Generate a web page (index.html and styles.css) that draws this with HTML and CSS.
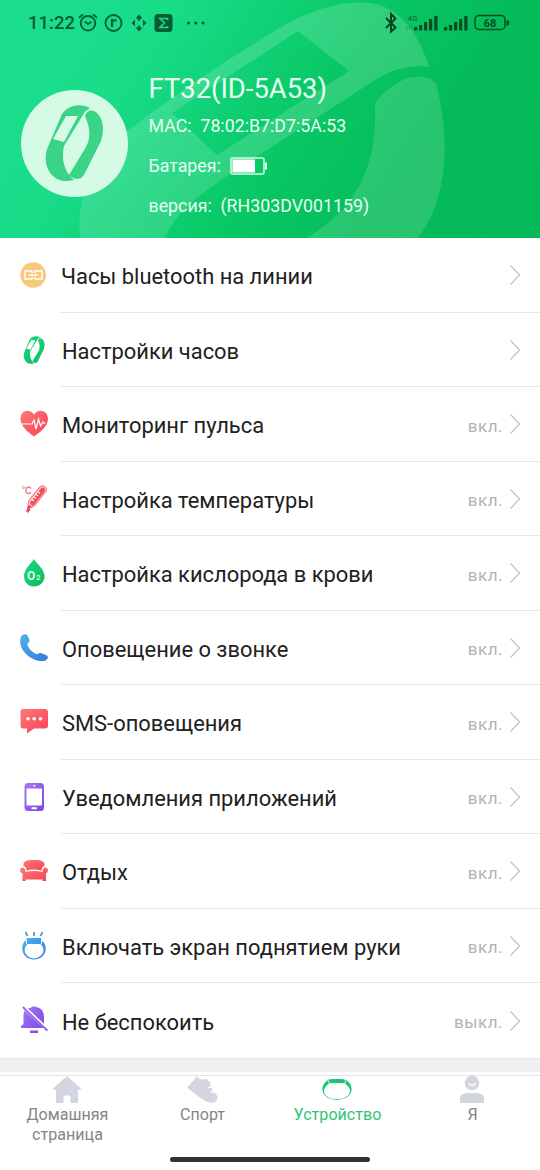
FILE: index.html
```html
<!DOCTYPE html>
<html lang="ru">
<head>
<meta charset="utf-8">
<title>Устройство</title>
<link rel="stylesheet" href="styles.css">
</head>
<body>
<svg class="defs" width="0" height="0">
  <defs>
    <linearGradient id="red" x1="0" y1="0" x2="1" y2="1"><stop offset="0" stop-color="#fb7b78"/><stop offset="1" stop-color="#f93f55"/></linearGradient>
    <linearGradient id="green" x1="0" y1="0" x2="1" y2="1"><stop offset="0" stop-color="#1cdc86"/><stop offset="1" stop-color="#0bb95a"/></linearGradient>
    <linearGradient id="blue" x1="0" y1="0" x2="1" y2="1"><stop offset="0" stop-color="#4ab4ea"/><stop offset="1" stop-color="#3879e0"/></linearGradient>
    <linearGradient id="violet" x1="0" y1="0" x2="1" y2="1"><stop offset="0" stop-color="#a77af2"/><stop offset="1" stop-color="#7b45e8"/></linearGradient>
    <symbol id="band" viewBox="0 0 60 80">
      <path fill-rule="evenodd" d="M46 5C37 0 24 2 18 11L3 46C-2 62 7 79 24 78L30 77C20 69 17 55 20 43L39 12C41 8 43 7 46 5ZM22 13L34 13L20 39L9 36Z"/>
      <path d="M41 13C43 6 50 6 54 11C60 18 60 28 57 38L41 70C38 77 31 78 25 72L42 44C48 32 45 23 41 13Z"/>
    </symbol>
    <symbol id="chevron" viewBox="0 0 12 22"><path d="M1.5 1.5L10.5 11L1.5 20.5" fill="none" stroke="#c4c4c4" stroke-width="1.3"/></symbol>
  </defs>
</svg>

<header class="header">
  <svg class="watermark" width="540" height="238" viewBox="0 0 540 238">
    <defs><linearGradient id="wm" x1="0" y1="1" x2="1" y2="0"><stop offset="0" stop-color="#fff" stop-opacity=".13"/><stop offset="1" stop-color="#fff" stop-opacity=".17"/></linearGradient></defs>
    <path fill="url(#wm)" fill-rule="evenodd" d="M80 238C76 190 96 152 135 125C180 92 220 64 270 34C315 6 350 -2 380 5C405 14 421 40 429 67C410 64 391 69 372 82L270 148C215 183 177 207 165 238ZM172 113L298 31L349 71L217 155Z"/>
    <path fill="#fff" fill-opacity=".14" d="M375 107C375 98 392 85 405 79C417 75 431 76 436 84C452 145 446 202 418 238H306C352 212 378 170 375 107Z"/>
  </svg>

  <div class="status">
    <span class="clock">11:22</span>
    <svg class="status-left" width="130" height="24" viewBox="0 0 130 24" fill="none" stroke="#075c31" stroke-width="1.8">
      <circle cx="12" cy="12.3" r="7.3"/><path d="M3 6.8L7 3.4M17 3.4L21 6.8M9 10.5L12 13.2L15.3 10.8"/>
      <circle cx="37.500" cy="12" r="8"/><path d="M36 16V8M36 11.500C36.500 9.500 38 9 40.500 9.300" stroke-width="2.200"/>
      <g fill="#075c31" stroke="none"><path d="M63 3.5L66.5 7.5H64.2V9.5H61.8V7.5H59.5ZM63 20.5L66.5 16.5H64.2V14.5H61.8V16.5H59.5ZM55.5 12L59 8.8V15.2ZM70.500 12L67 8.8V15.2Z"/><rect x="78.500" y="3" width="18" height="18" rx="3.500"/></g>
      <path d="M91.500 9V7.500H84L88.500 12L84 16.500H91.500V15" stroke="#1cda8a" stroke-width="1.7"/>
      <g fill="#075c31" stroke="none"><circle cx="112.500" cy="12" r="1.500"/><circle cx="119.800" cy="12" r="1.500"/><circle cx="127" cy="12" r="1.500"/></g>
    </svg>
    <svg class="status-right" width="126" height="24" viewBox="0 0 126 24">
      <path d="M2 7L11.500 16.500L7 20.500V3L11.500 7.500L2 17" fill="none" stroke="#06461f" stroke-width="2"/>
      <g fill="#064d24" font-family="Roboto, sans-serif"><text x="23.500" y="9.500" font-size="8" fill-opacity=".85">4G</text><text x="21" y="19" font-size="6" fill-opacity=".35">4P</text></g>
      <g fill="#064d24"><path d="M30 16h3.200V19.500h-3.200zM35 14h3.200v5.500h-3.200zM40 11h3.200v8.500h-3.200zM45 8h3.200v11.500h-3.200zM50.300 5h3.200V19.500h-3.200zM60 16h3.200V19.500h-3.200zM65 14h3.200v5.500h-3.200zM70 11h3.200v8.500h-3.200zM75 8h3.200v11.500h-3.200zM80.300 5h3.200V19.500h-3.200zM122.500 9.500h1.500a1 1 0 0 1 1 1v3a1 1 0 0 1-1 1h-1.500z"/></g>
      <rect x="91" y="4.500" width="30" height="14" rx="4" fill="none" stroke="#064d24" stroke-width="1.500"/>
      <text x="106" y="15.500" text-anchor="middle" font-family="Roboto, sans-serif" font-size="11" font-weight="700" fill="#064d24">68</text>
    </svg>
  </div>

  <div class="device">
    <div class="avatar"><svg width="60" height="80" fill="#3bd487"><use href="#band"/></svg></div>
    <div class="info">
      <div class="name">FT32(ID-5A53)</div>
      <div class="detail mac">MAC:&nbsp; 78:02:B7:D7:5A:53</div>
      <div class="detail battery">Батарея:
        <svg width="38" height="18" viewBox="0 0 38 18"><rect x="1" y="1" width="33" height="16" rx="1.500" fill="none" stroke="#d9fae9" stroke-width="1.500"/><rect x="2.500" y="2.500" width="22.500" height="13" fill="#fff"/><path d="M35 5.500h2v7h-2z" fill="#e5fff1"/></svg>
      </div>
      <div class="detail version">версия:&nbsp; (RH303DV001159)</div>
    </div>
  </div>
</header>

<main class="list">
  <div class="row first">
    <svg class="icon" viewBox="0 0 28 28"><circle cx="13.200" cy="14" r="12.800" fill="#fbc77d"/><g fill="none" stroke="#fff" stroke-width="1.500"><path d="M12 12V10H5V18H12V16M15 12V10H22V18H15V16M9 14H18"/></g></svg>
    <div class="cell"><span class="label">Часы bluetooth на линии</span><svg class="chev"><use href="#chevron"/></svg></div>
  </div>
  <div class="row">
    <svg class="icon" viewBox="0 0 28 28"><g fill="url(#green)"><use href="#band" x="3" y="-.5" width="22" height="29"/></g></svg>
    <div class="cell"><span class="label">Настройки часов</span><svg class="chev"><use href="#chevron"/></svg></div>
  </div>
  <div class="row">
    <svg class="icon" viewBox="0 0 28 28"><path fill="url(#red)" d="M14 26.500C9 23 .5 16.500 .5 9C.5 0 10-2 14 4.500C18-2 28 0 28 9C28 16.500 19 23 14 26.500Z"/><path d="M1 14H12L14 10L16 19L18.500 9L20.500 16L23 12L25 14" fill="none" stroke="#fff" stroke-width="1.200"/></svg>
    <div class="cell"><span class="label">Мониторинг пульса</span><span class="state">вкл.</span><svg class="chev"><use href="#chevron"/></svg></div>
  </div>
  <div class="row">
    <svg class="icon" viewBox="0 0 28 28"><g fill="none" stroke="#ee7b80"><circle cx="3.500" cy="2.500" r="1"/><path d="M11 3.500C9 .8 5.800 2.300 5.800 5.300C5.800 8.500 9 9.500 11 7.300" stroke-width="1.400"/><path d="M8 21L9 15.500L20 2C23-.8 28 2.500 25.800 6.500L15 20L11 22.500Z" stroke-width="1.200" fill="#fff3f2"/><path d="M12.500 18L22.700 5" stroke="#f14d5a" stroke-width="5" stroke-linecap="round"/><path d="M11.500 14L14 16M13.500 11.500L16 13.500M15.500 9L18 11M17.500 6.500L20 8.500" stroke="#fff" stroke-width="1.100"/><path d="M10.500 20.500L8.500 23V25L7 27" stroke="#e9505f" stroke-width="3"/></g></svg>
    <div class="cell"><span class="label">Настройка температуры</span><span class="state">вкл.</span><svg class="chev"><use href="#chevron"/></svg></div>
  </div>
  <div class="row">
    <svg class="icon" viewBox="0 0 28 28"><path fill="url(#green)" d="M14 0C15 3 24.500 10 24.500 17C24.500 23 20 27.500 14 27.500C8 27.500 4 23 4 17C4 10 12.500 3 14 0Z"/><g fill="#d7ffe9" font-family="Roboto, sans-serif" font-weight="700"><text x="7" y="20.500" font-size="12">O</text><text x="16" y="20.500" font-size="8">2</text></g></svg>
    <div class="cell"><span class="label">Настройка кислорода в крови</span><span class="state">вкл.</span><svg class="chev"><use href="#chevron"/></svg></div>
  </div>
  <div class="row">
    <svg class="icon" viewBox="0 0 28 28"><path fill="url(#blue)" d="M1 2.500C3 0 6-.5 7.500 1.500L9.500 6C10 8 7 9 7.500 11C9 15 12.500 18.500 16 20C18 20.500 18.500 18.500 21 19L27 21.500C28.500 23 28 25 25.500 26.500C15 30-4 17 1 2.500Z"/></svg>
    <div class="cell"><span class="label">Оповещение о звонке</span><span class="state">вкл.</span><svg class="chev"><use href="#chevron"/></svg></div>
  </div>
  <div class="row">
    <svg class="icon" viewBox="0 0 28 28"><path fill="url(#red)" d="M3 1H25Q28 1 28 4V17.500Q28 20.500 25 20.500H14L7 25.500V20.500H3Q0.500 20.500 .5 17.500V4Q.5 1 3 1Z"/><g fill="#fff"><circle cx="8" cy="10.800" r="1.800"/><circle cx="14.200" cy="10.800" r="1.800"/><circle cx="20.500" cy="10.800" r="1.800"/></g></svg>
    <div class="cell"><span class="label">SMS-оповещения</span><span class="state">вкл.</span><svg class="chev"><use href="#chevron"/></svg></div>
  </div>
  <div class="row">
    <svg class="icon" viewBox="0 0 28 28"><rect x="4.500" width="19.500" height="28" rx="3.500" fill="url(#violet)"/><g fill="#fff"><rect x="6.500" y="5.500" width="15.500" height="17" rx=".8"/><circle cx="14.200" cy="2.800" r="1"/><rect x="11.500" y="24.300" width="5.500" height="1.900" rx=".8"/></g></svg>
    <div class="cell"><span class="label">Уведомления приложений</span><span class="state">вкл.</span><svg class="chev"><use href="#chevron"/></svg></div>
  </div>
  <div class="row">
    <svg class="icon" viewBox="0 0 28 28"><g fill="url(#red)"><path d="M3.500 9C3 4 6 3 14 3C22 3 25 4 24.500 9C22.500 9.500 21.500 11 21.500 13.500C16 12 11 12 6.500 13.500C6.500 11 5.500 9.500 3.500 9Z"/><path d="M1 11C3 9.500 5.500 11 5.500 15C11 13.500 17 13.500 22.500 15C22.500 11 25 9.500 27 11C28.500 13 28 15.500 26 16.500V24H22.500V22.500H5.500V24H2.500V16.500C0 15.500-.5 13 1 11Z"/></g></svg>
    <div class="cell"><span class="label">Отдых</span><span class="state">вкл.</span><svg class="chev"><use href="#chevron"/></svg></div>
  </div>
  <div class="row">
    <svg class="icon" viewBox="0 0 28 28"><path fill="url(#blue)" fill-rule="evenodd" d="M7 6H21V8C29 13 27 27 14 27.500C1 27 -.5 13 6 8ZM7.500 12C1.500 18 6 26 14 26.500C22 26 27 18 20.500 12Z"/><path d="M5.500 0L7.500 4M14 0V4M22.500 0L20.500 4" fill="none" stroke="#429ed7" stroke-width="1.700"/><path d="M6.500 7.500V12M21.500 7.500V12" stroke="#fff" stroke-width=".9"/></svg>
    <div class="cell"><span class="label">Включать экран поднятием руки</span><span class="state">вкл.</span><svg class="chev"><use href="#chevron"/></svg></div>
  </div>
  <div class="row last">
    <svg class="icon" viewBox="0 0 28 28"><path fill="url(#violet)" d="M7.500 2.500C9.500 2 11 2 12 1Q14-.5 16 1C22 2 24 6 24 11V18L7.500 2.500ZM4.500 4.500L23.500 22H1V20L3.500 18V10C3.500 8 4 6 4.500 4.500ZM10 24.500H18V27H10Z"/><path d="M3 1L27.500 24.500" stroke="#9462ef" stroke-width="2.300"/><path d="M5 1L28 22.800" stroke="#fff" stroke-width="1.300"/></svg>
    <div class="cell"><span class="label">Не беспокоить</span><span class="state">выкл.</span><svg class="chev"><use href="#chevron"/></svg></div>
  </div>
</main>
<div class="spacer"></div>

<nav class="tabs">
  <div class="tab">
    <svg viewBox="0 0 32 28" fill="#d3d6e0"><path d="M16 0L30 12.500Q30 14 28 14H27V27H19.500V20.500Q16 18 12.500 20.500V27H5V14H4Q2 14 2 12.500Z"/></svg>
    <span>Домашняя страница</span>
  </div>
  <div class="tab">
    <svg viewBox="0 0 32 28" fill="#d3d6e0"><path d="M10.500 0C12 3 16 4 20 3L24 6L25 10L21.500 11.500L22 12.500L26 11.500L26.500 15L24 16L24.500 17L28 16.500C32 19 33 23 29 26C21 29 13 21 1 11.500C4 8 8 5 10.500 0Z"/></svg>
    <span>Спорт</span>
  </div>
  <div class="tab active">
    <svg viewBox="0 0 32 28"><path fill="#1cca74" fill-rule="evenodd" d="M7 4C8 2.500 23 2.500 25 4C34 9 33 23.500 16 24C-1 23.500-2 9 7 4ZM7.500 8C-1 14 3 23 16 23.200C29 23 33 14 24.500 8Z"/><path d="M7.500 4.500L8 7.500H24L24.500 4.500" fill="none" stroke="#d5ffe7"/><path d="M8.500 3.500H23.500V6H8.500Z" fill="#25bd77"/></svg>
    <span>Устройство</span>
  </div>
  <div class="tab">
    <svg viewBox="0 0 32 28" fill="#d3d5df"><circle cx="16" cy="7" r="7.300"/><path d="M13 7.500Q16 11.500 19.500 7.500" fill="none" stroke="#fff" stroke-width="1.600"/><path d="M4 27V23Q4 17 11 17H21Q28 17 28 23V27Z"/></svg>
    <span>Я</span>
  </div>
</nav>
<div class="home-bar"></div>
</body>
</html>
```
FILE: styles.css
```css
* { box-sizing: border-box; }
body { margin: 0; width: 540px; height: 1170px; overflow: hidden; background: #fff; font-family: Roboto, "Noto Sans", sans-serif; color: #212121; }
.defs { display: block; height: 0; }
.header { position: relative; height: 238px; overflow: hidden; background: linear-gradient(123deg, #1bdf8e 0%, #19dc89 25%, #08c764 55%, #05bb59 75%, #06b958 100%); }
.watermark { position: absolute; inset: 0; }
.status { position: relative; display: flex; align-items: center; height: 46px; padding-left: 28px; }
.clock { width: 48px; font-size: 18.5px; font-weight: 500; color: #075c31; white-space: nowrap; }
.status-right { margin-left: 178px; }
.device { position: relative; display: flex; padding-left: 20.5px; }
.avatar { display: flex; align-items: center; justify-content: center; width: 107.5px; height: 107.5px; margin-top: 43.5px; border-radius: 50%; background: #d5fbe6; }
.info { margin-left: 20.5px; padding-top: 25px; color: #e6fff2; white-space: nowrap; }
.name { font-size: 27.4px; line-height: 36px; }
.detail { display: flex; align-items: center; height: 40px; margin-top: -1.5px; margin-bottom: 1.5px; font-size: 17.8px; }
.detail svg { margin-left: 9px; }
.row { display: flex; align-items: center; height: 74.5px; padding-left: 20px; }
.icon { flex: none; width: 28px; height: 28px; margin-right: 13px; overflow: visible; }
.cell { display: flex; flex: 1; align-items: center; height: 100%; padding: 2px 19px 0 1px; border-bottom: 1px solid #e6e6e6; }
.first .icon { margin-right: 12px; }
.last .cell { border-bottom: 0; }
.label { flex: 1; padding-top: 2px; font-size: 21.9px; white-space: nowrap; }
.state { margin-right: 6px; padding-top: 2px; font-size: 17px; letter-spacing: .5px; color: #b2b2b2; }
.chev { width: 12px; height: 22px; margin-top: -1.5px; }
.spacer { height: 14px; background: #eff0f2; border-top: 1px solid #e5e6e8; }
.tabs { display: flex; height: 81.5px; margin-top: 3.5px; border-top: 1px solid #e2e3e5; }
.tab { display: flex; flex: 1; flex-direction: column; align-items: center; font-size: 16.1px; line-height: 20px; text-align: center; color: #858585; }
.tab svg { width: 32px; height: 28px; margin-left: -1px; }
.tab span { width: 100px; padding-top: 1px; }
.tab.active { color: #2dc574; }
.home-bar { width: 200px; height: 5px; margin: 0 auto; border-radius: 3px; background: #333; }
```
